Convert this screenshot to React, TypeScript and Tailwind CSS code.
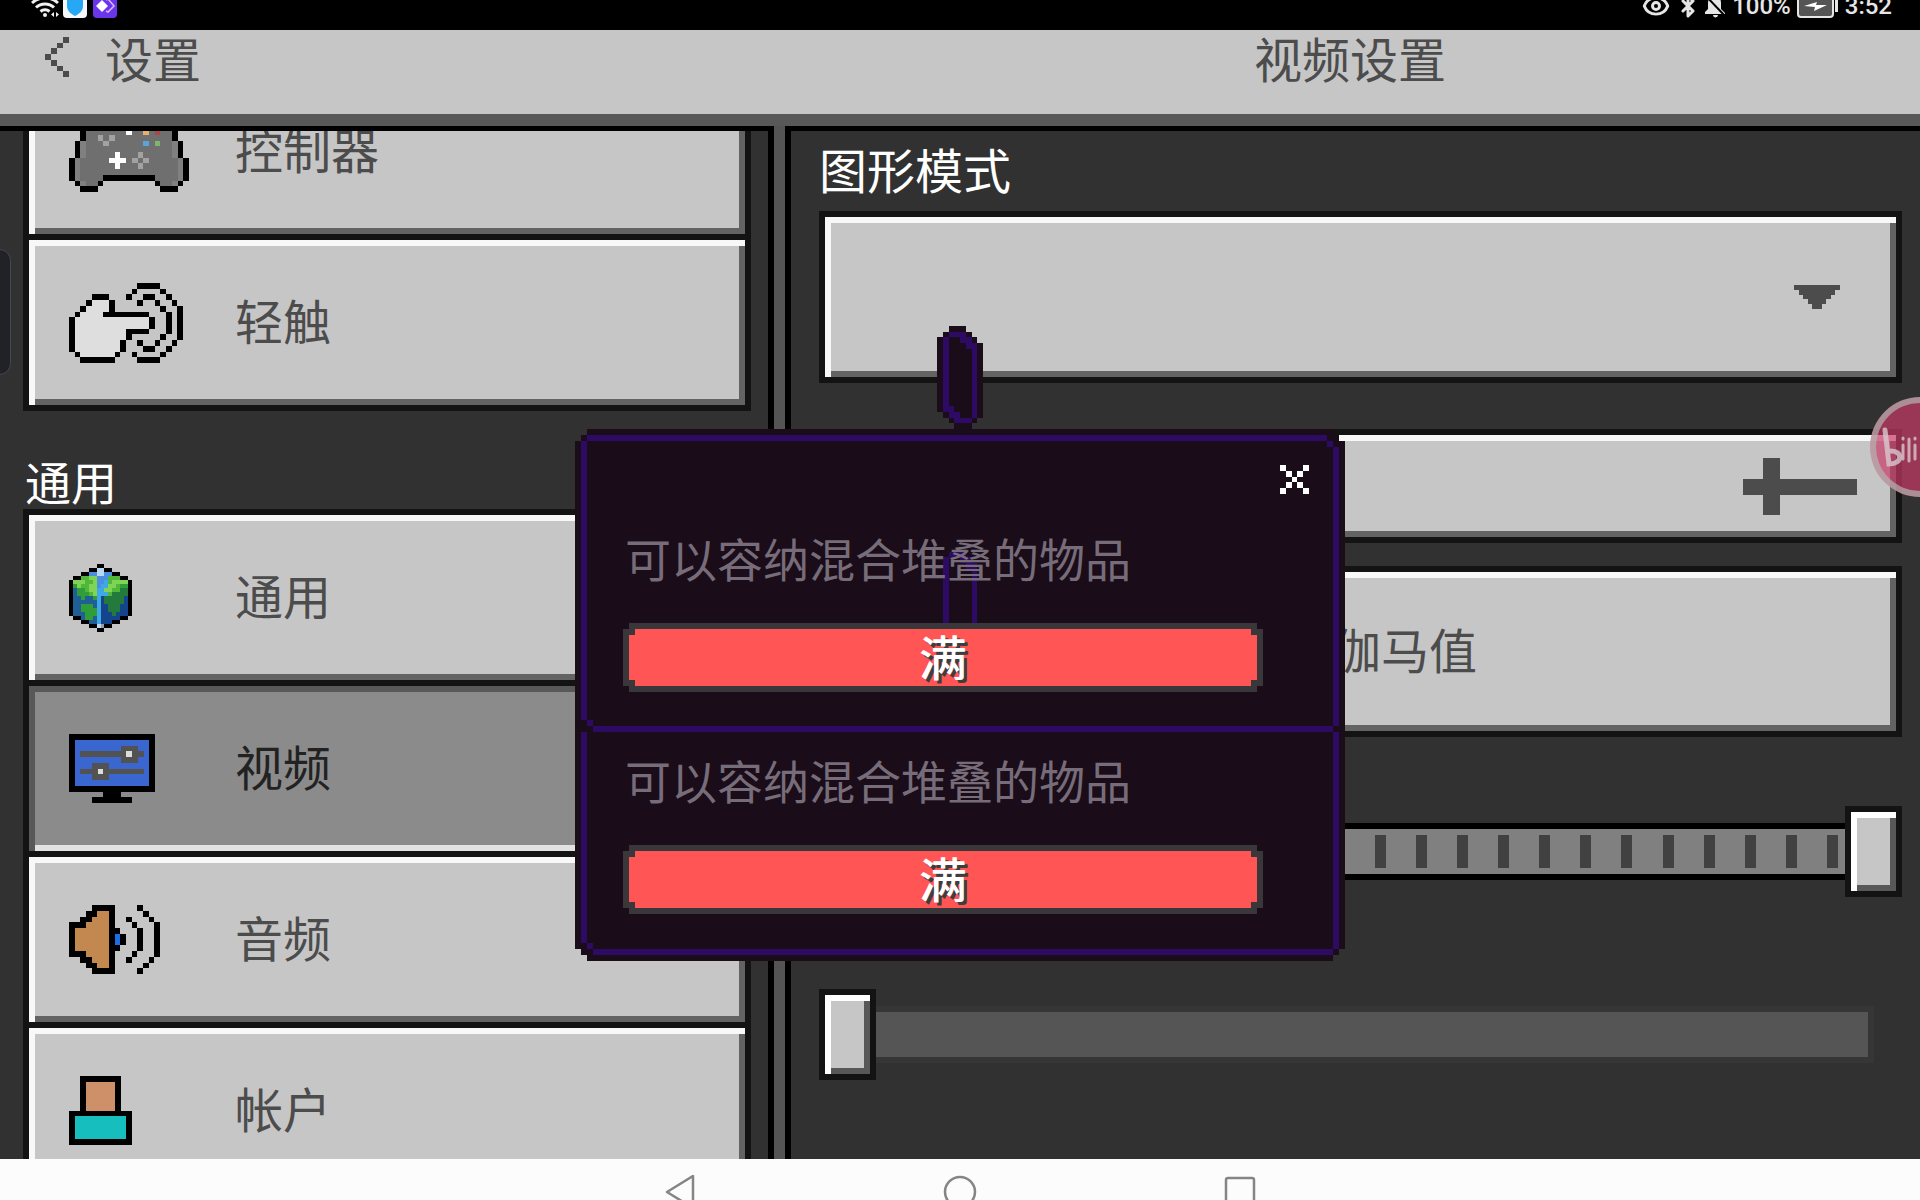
import { useState } from 'react';
import { Bluetooth, Eye } from 'lucide-react';
import clsx from 'clsx';

type Palette = Record<string, string>;

const BASE: Palette = { K: '#000000', W: '#ffffff' };

// One character is one square of the sprite, '.' is empty
function Sprite({ rows, palette, className }: { rows: string[]; palette?: Palette; className?: string }) {
  const colors = { ...BASE, ...palette };
  return (
    <svg
      viewBox={`0 0 ${rows[0].length} ${rows.length}`}
      preserveAspectRatio="none"
      shapeRendering="crispEdges"
      className={clsx('shrink-0', className)}
      aria-hidden="true"
    >
      {rows.flatMap((row, y) =>
        row.split('').map((c, x) =>
          c === '.' ? null : <rect key={`${x}-${y}`} x={x} y={y} width={1} height={1} fill={colors[c]} />
        )
      )}
    </svg>
  );
}

const controller = [
  '....KKKKKKKKKKKKK....',
  '...KgggggggggggggK...',
  '...KgggggggggggggK...',
  '..KgggggggWggOgRggK..',
  '..KggLgLggggggggggK..',
  '.KhgggLggggggBgGgghK.',
  '.KhggggggggggggggghK.',
  '.KhgggggWgggLggggghK.',
  'KhgggggWWWgLgLggggghK',
  'KhggggggWgggLgggggghK',
  'KhggggggggggggggggghK',
  'KhggggKKKKKKKKKgggghK',
  '.KhggK.........KgghK.',
  '..KKK...........KKK..',
];

const touch = [
  '............KKKK....',
  '...........K....K...',
  '....KKK...K..KK..K..',
  '...KwwwK....K..K..K.',
  '..KwwwwK........K..K',
  '.KwwwwKKKKKKKK...K.K',
  'KwwwwwwwwwwwwwK..K.K',
  'KwwwwwwwwwwwwwK..K.K',
  'KwwwwwwwwwKKKK...K.K',
  'KwwwwwwwwwK.....K..K',
  'KwwwwwwwwK..K..K..K.',
  'KwwwwwwwwK...KK..K..',
  '.KwwwwwwK..K....K...',
  '..KKKKKK....KKKK....',
];

const globe = [
  '.......KK.......',
  '.....KKllKK.....',
  '...KKbbllbbKK...',
  '.KKggggbbbgggKK.'.replace('gggg', 'ggyy'),
  'KyyyggybbcgyyyyK',
  'KGyggyybccyygGGK',
  'KtGGgyyccyyggddK',
  'KtGGGgycccgddddK',
  'KttGttGcndddddnK',
  'KttttttcndddddnK',
  'KttGGGtcnndddnnK',
  'KttGGGGcnndddnnK',
  'KtttGGGcnnndnnnK',
  '.KKtGGtcnnnnnKK.',
  '...KKttcnnnKK...',
  '.....KKlsKK.....',
  '.......KK.......',
];

const monitor = [
  'KKKKKKKKKKKKKKK',
  'KbbbbbbbbbbbbbK',
  'KbbbbbbbbdddbbK',
  'KbddddddddwddbK',
  'KbbbbbbbbdddbbK',
  'KbbbdddbbbbbbbK',
  'KbdddwdddddddbK',
  'KbbbdddbbbbbbbK',
  'KbbbbbbbbbbbbbK',
  'KKKKKKKKKKKKKKK',
  '......KKK......',
  '....KKKKKKK....',
];

const speaker = [
  '....KKKK....K...',
  '...KKooK.....K..',
  '..KKoooK..K...K.',
  'KKKooooK...K...K',
  'KooooooKK...K..K',
  'KooooooKbK..K..K',
  'KooooooKbK..K..K',
  'KooooooKK...K..K',
  'KKKooooK...K...K',
  '..KKoooK..K...K.',
  '...KKooK.....K..',
  '....KKKK....K...',
];

const account = [
  '..KKKKKKK..',
  '..KsssssK..',
  '..KsssssK..',
  '..KsssssK..',
  '..KsssssK..',
  '..KsssssK..',
  'KKKKKKKKKKK',
  'KtttttttttK',
  'KtttttttttK',
  'KtttttttttK',
  'KtttttttttK',
  'KKKKKKKKKKK',
];

const chevron = ['...K', '..K.', '.K..', 'K...', '.K..', '..K.', '...K'];
const cross = ['W...W', '.W.W.', '..W..', '.W.W.', 'W...W'];
const arrowDown = ['KKKKKKKKKK', '.KKKKKKKK.', '..KKKKKK..', '...KKKK...', '....KK....'];

const pill = [
  '..KKK...',
  '.KPPPK..',
  'KPKKPPK.',
  'KPKKKPPK',
  'KPKKKKPK',
  'KPKKKKPK',
  'KPKKKKPK',
  'KPKKKKPK',
  'KPKKKKPK',
  'KPKKKKPK',
  'KPKKKKPK',
  'KPKKKKPK',
  'KPKKKKPK',
  'KPKKKKPK',
  'KPPKKKPK',
  '.KPPKKPK',
  '..KPPPK.',
  '...KKK..',
];
const pillColors = { K: '#1a0c18', P: '#2d0a63' };

const raised = 'bg-[#c6c6c6] shadow-[inset_6px_6px_0_#f8f8f8,inset_-6px_-6px_0_#636363]';
const pressed = 'bg-[#8b8b8b] shadow-[inset_6px_6px_0_#585858,inset_-6px_-6px_0_#e2e2e2]';

// Corners cut out in 6px squares
const notch =
  '[clip-path:polygon(6px_0,calc(100%-6px)_0,calc(100%-6px)_6px,100%_6px,100%_calc(100%-6px),calc(100%-6px)_calc(100%-6px),calc(100%-6px)_100%,6px_100%,6px_calc(100%-6px),0_calc(100%-6px),0_6px,6px_6px)]';
const stairs =
  '[clip-path:polygon(12px_0,calc(100%-12px)_0,calc(100%-12px)_6px,calc(100%-6px)_6px,calc(100%-6px)_12px,100%_12px,100%_calc(100%-12px),calc(100%-6px)_calc(100%-12px),calc(100%-6px)_calc(100%-6px),calc(100%-12px)_calc(100%-6px),calc(100%-12px)_100%,12px_100%,12px_calc(100%-6px),6px_calc(100%-6px),6px_calc(100%-12px),0_calc(100%-12px),0_12px,6px_12px,6px_6px,12px_6px)]';
const frameTop =
  '[clip-path:polygon(6px_0,calc(100%-12px)_0,calc(100%-12px)_6px,calc(100%-6px)_6px,calc(100%-6px)_12px,100%_12px,100%_calc(100%-6px),calc(100%-6px)_calc(100%-6px),calc(100%-6px)_100%,12px_100%,12px_calc(100%-6px),6px_calc(100%-6px),6px_calc(100%-12px),0_calc(100%-12px),0_6px,6px_6px)]';
const frameBottom =
  '[clip-path:polygon(0_0,100%_0,100%_calc(100%-6px),calc(100%-6px)_calc(100%-6px),calc(100%-6px)_100%,12px_100%,12px_calc(100%-6px),6px_calc(100%-6px),6px_calc(100%-12px),0_calc(100%-12px))]';
const cardTop =
  '[clip-path:polygon(0_0,calc(100%-6px)_0,calc(100%-6px)_6px,100%_6px,100%_100%,6px_100%,6px_calc(100%-6px),0_calc(100%-6px))]';
const cardBottom = '[clip-path:polygon(0_0,100%_0,100%_100%,6px_100%,6px_calc(100%-6px),0_calc(100%-6px))]';

function MenuItem({ label, active, onClick, children }: {
  label: string;
  active?: boolean;
  onClick: () => void;
  children: React.ReactNode;
}) {
  return (
    <button
      type="button"
      onClick={onClick}
      className={clsx(
        'flex h-[165px] w-full shrink-0 items-center pl-10 text-left text-5xl',
        active ? `${pressed} text-[#222222]` : `${raised} text-[#4c4c4c]`
      )}
    >
      <span className="flex w-[166px]">{children}</span>
      <span className="pb-2">{label}</span>
    </button>
  );
}

function StorageCard({ first }: { first?: boolean }) {
  return (
    <section className={clsx('bg-[#2d0a63] px-1.5 pb-1.5', first ? `pt-1.5 ${frameTop}` : frameBottom)}>
      <div
        className={clsx(
          'bg-[#1a0c18] pr-[70px] pl-9',
          first ? `h-[285px] pt-[89px] ${cardTop}` : `h-[217px] pt-5 ${cardBottom}`
        )}
      >
        {first && (
          <Sprite rows={pill.slice(0, 14)} palette={pillColors} className="absolute top-[117px] left-[362px] h-20 w-[46px]" />
        )}
        <p className="relative mb-[39px] pl-0.5 text-[46px] leading-[54px] text-[#776c79]">可以容纳混合堆叠的物品</p>
        <div className={`relative h-[69px] bg-[#3a373b] p-1.5 ${notch}`}>
          <div
            className={`flex h-full items-center justify-center bg-[#ff5555] pb-1.5 text-5xl font-medium text-white [text-shadow:3px_3px_0_#3e3e3e] ${notch}`}
          >
            满
          </div>
        </div>
      </div>
    </section>
  );
}

const thumb =
  'col-start-1 row-start-1 h-[91px] w-full appearance-none bg-transparent [&::-webkit-slider-thumb]:h-[91px] [&::-webkit-slider-thumb]:w-[57px] [&::-webkit-slider-thumb]:appearance-none [&::-webkit-slider-thumb]:border-6 [&::-webkit-slider-thumb]:border-[#131313] [&::-webkit-slider-thumb]:bg-[#c6c6c6] [&::-webkit-slider-thumb]:shadow-[inset_6px_6px_0_#ffffff,inset_-6px_-6px_0_#585858]';

export default function App() {
  const [tab, setTab] = useState('video');
  const [fancy, setFancy] = useState(false);

  return (
    <div className="relative flex h-screen flex-col overflow-hidden bg-[#313131] font-['Noto_Sans_CJK_SC',sans-serif]">
      {/* 状态栏 */}
      <div className="h-[30px] shrink-0 overflow-hidden bg-black">
        <div className="-mt-2 flex h-7 items-center pr-7 pl-[31px] font-[Roboto,sans-serif] text-2xl text-[#e6e6e6]">
          <svg viewBox="0 0 28 24" className="mr-1 h-6 w-7" fill="none" stroke="#f0f0f0" strokeWidth="3">
            <path d="M1 9a19 19 0 0 1 26 0M5 13.500a13 13 0 0 1 18 0M9.500 17.500a7 7 0 0 1 9 0" />
            <circle cx="14" cy="21" r="2" fill="#f0f0f0" stroke="none" />
            <path d="M23 18v5l-3-2.500zM25 18v5l3-2.500z" fill="#f0f0f0" stroke="none" />
          </svg>
          <svg viewBox="0 0 24 24" className="mr-1.5 h-6 w-6">
            <rect width="24" height="24" rx="4" fill="#f4f8fc" />
            <path d="M12 2l8 2v8c0 5-4 8-8 10-4-2-8-5-8-10V4z" fill="#27a8f5" />
          </svg>
          <svg viewBox="0 0 24 24" className="h-6 w-6">
            <rect width="24" height="24" rx="4" fill="#6b35ea" />
            <path d="M9 6l6 6-6 6-6-6z" fill="#fff" />
            <path d="M13 6l2-1 6 7-6 6-2-1" fill="none" stroke="#d9b8ff" strokeWidth="1.500" />
          </svg>
          <div className="ml-auto flex items-center">
            <Eye className="mr-1.5 h-7 w-7" strokeWidth={2.5} />
            <Bluetooth className="mr-1 h-6 w-6" strokeWidth={3} />
            <svg viewBox="0 0 22 24" className="mr-1.5 h-6 w-[22px]" fill="#e6e6e6">
              <path d="M11 1c4 1 6 4 6 8v6l4 4v1H1v-2l3-3V9c0-4 3-7 7-8zM9 21h5a2 2 0 0 1-5 0z" />
              <path d="M1 1l20 21" stroke="#000" strokeWidth="2" />
            </svg>
            <span className="font-medium">100%</span>
            <svg viewBox="0 0 42 24" className="mx-1.5 h-6 w-[42px]">
              <rect x="1" y="2" width="35" height="21" rx="3" fill="#555" stroke="#e6e6e6" strokeWidth="2" />
              <path d="M39.500 6v12" stroke="#e6e6e6" strokeWidth="3" />
              <path d="M7 12l13-4-1 3h11l-13 6 1-4z" fill="#fff" />
            </svg>
            <span className="font-medium">3:52</span>
          </div>
        </div>
      </div>

      {/* 标题栏 */}
      <header className="flex h-[84px] shrink-0 items-center bg-[#c6c6c6] text-5xl text-[#4c4c4c]">
        <div className="flex w-2/5 items-center pl-[45px]">
          <button type="button" aria-label="返回" className="mr-9 pb-[30px]">
            <Sprite rows={chevron} palette={{ K: '#4c4c4c' }} className="h-10 w-6" />
          </button>
          <span className="pb-[30px]">设置</span>
        </div>
        <h1 className="flex-1 pr-3 pb-[30px] pl-6 text-center">视频设置</h1>
      </header>
      <div className="h-3 shrink-0 bg-[#585858]" />

      <div className="flex min-h-0 flex-1">
        <nav className="w-2/5 overflow-hidden border-t-5 border-black pr-[17px] pl-[23px]">
          <div className="-mt-[68px] flex flex-col gap-1.5 bg-[#131313] p-1.5">
            <MenuItem label="控制器" active={tab === 'controller'} onClick={() => setTab('controller')}>
              <Sprite
                rows={controller}
                palette={{ g: '#6f6f6f', h: '#808080', L: '#a2a2a2', O: '#e8b070', R: '#a84848', B: '#5aa5d8', G: '#7fb56c' }}
                className="h-20 w-[120px]"
              />
            </MenuItem>
            <MenuItem label="轻触" active={tab === 'touch'} onClick={() => setTab('touch')}>
              <Sprite rows={touch} palette={{ w: '#dedede' }} className="h-20 w-[114px]" />
            </MenuItem>
          </div>
          <h2 className="flex h-[98px] items-end pb-1 pl-0.5 text-[46px] leading-[50px] text-white">通用</h2>
          <div className="flex flex-col gap-1.5 bg-[#131313] p-1.5">
            <MenuItem label="通用" active={tab === 'general'} onClick={() => setTab('general')}>
              <Sprite
                rows={globe}
                palette={{
                  l: '#b8d8f4', b: '#4a90e0', g: '#4fb83a', y: '#7fd455', G: '#2f9e38', d: '#237a3c',
                  n: '#14448c', t: '#1f5f96', c: '#3fa9e8', s: '#9a9aa8',
                }}
                className="h-[68px] w-[63px]"
              />
            </MenuItem>
            <MenuItem label="视频" active={tab === 'video'} onClick={() => setTab('video')}>
              <Sprite rows={monitor} palette={{ b: '#3a66cf', d: '#525252', w: '#dcdcdc' }} className="h-[69px] w-[86px]" />
            </MenuItem>
            <MenuItem label="音频" active={tab === 'audio'} onClick={() => setTab('audio')}>
              <Sprite rows={speaker} palette={{ o: '#c2884f', b: '#1a6ee8' }} className="h-[69px] w-[91px]" />
            </MenuItem>
            <MenuItem label="帐户" active={tab === 'account'} onClick={() => setTab('account')}>
              <Sprite rows={account} palette={{ s: '#ce9068', t: '#16bfbd' }} className="h-[69px] w-[63px]" />
            </MenuItem>
          </div>
        </nav>

        <div className="w-[23px] shrink-0 border-x-6 border-black bg-[#545454]" />

        <main className="min-w-0 flex-1 overflow-hidden border-t-5 border-black pr-[18px] pl-7 text-[#4c4c4c]">
          <label htmlFor="graphics" className="block h-20 text-5xl leading-[74px] text-white">图形模式</label>
          <div className="grid items-center">
            <select
              id="graphics"
              className={`col-start-1 row-start-1 h-[172px] w-full appearance-none border-6 border-[#131313] ${raised}`}
            >
              <option value=""></option>
            </select>
            <Sprite
              rows={arrowDown}
              palette={{ K: '#4c4c4c' }}
              className="pointer-events-none col-start-1 row-start-1 mr-[62px] h-6 w-[46px] justify-self-end"
            />
          </div>
          <button
            type="button"
            role="switch"
            aria-checked={fancy}
            aria-label="精美图像"
            onClick={() => setFancy(!fancy)}
            className={`mt-[46px] flex h-[114px] w-full items-center justify-end border-6 border-[#131313] pr-[39px] ${raised}`}
          >
            <svg viewBox="0 0 114 57" className="h-[57px] w-[114px]" fill="#4c4c4c" shapeRendering="crispEdges">
              <rect y="21" width="114" height="16" />
              <rect x="20" width="17" height="57" />
            </svg>
          </button>
          <button
            type="button"
            className={`mt-[23px] flex h-[171px] w-full items-center justify-center border-6 border-[#131313] pr-1 pb-2 pl-[93px] text-5xl ${raised}`}
          >
            伽马值
          </button>
          <div className="mt-[69px] grid items-center">
            <div className="col-start-1 row-start-1 flex h-[57px] justify-between border-6 border-black bg-[#808080] py-1.5 pr-[58px] pl-4">
              {Array.from({ length: 25 }, (_, i) => (
                <span key={i} className="w-[11px] bg-[#414141]" />
              ))}
            </div>
            <input type="range" aria-label="亮度" min={0} max={100} defaultValue={100} className={thumb} />
          </div>
          <div className="mt-[92px] grid items-center">
            <div className="col-start-1 row-start-1 mr-7 h-[57px] border-6 border-[#363636] bg-[#555555]" />
            <input type="range" aria-label="视野" min={0} max={100} defaultValue={0} className={thumb} />
          </div>
        </main>
      </div>

      {/* 系统导航 */}
      <footer className="h-[41px] shrink-0 overflow-hidden bg-[#fcfcfc]">
        <div className="flex items-start justify-center gap-[246px] pt-4 text-[#858585]">
          <button type="button" aria-label="后退">
            <svg viewBox="0 0 34 34" className="h-[34px] w-[34px]" fill="none" stroke="currentColor" strokeWidth="2.500" strokeLinejoin="round">
              <path d="M30 1v32L4 17z" />
            </svg>
          </button>
          <button type="button" aria-label="主页">
            <svg viewBox="0 0 34 34" className="h-[34px] w-[34px]" fill="none" stroke="currentColor" strokeWidth="2.500">
              <circle cx="17" cy="17" r="15" />
            </svg>
          </button>
          <button type="button" aria-label="最近">
            <svg viewBox="0 0 34 34" className="h-[34px] w-[34px]" fill="none" stroke="currentColor" strokeWidth="2.500">
              <rect x="3" y="3" width="28" height="28" rx="2" />
            </svg>
          </button>
        </div>
      </footer>

      {/* 侧边把手 */}
      <div className="absolute top-[249px] -left-3 h-[126px] w-[23px] rounded-xl border border-[#3e4b50] bg-[#222226]" />

      <Sprite rows={pill} palette={pillColors} className="absolute top-[326px] left-[937px] h-[103px] w-[46px]" />

      {/* 容器提示 */}
      <div
        role="dialog"
        aria-label="容器"
        className={`absolute top-[429px] left-1/2 w-[770px] -translate-x-1/2 bg-[#1a0c18] p-1.5 ${stairs}`}
      >
        <StorageCard first />
        <StorageCard />
        <button type="button" aria-label="关闭" className="absolute top-9 right-9">
          <Sprite rows={cross} className="h-[29px] w-[29px]" />
        </button>
      </div>

      {/* 悬浮球 */}
      <div className="absolute top-[397px] -right-[50px] h-[100px] w-[100px] rounded-full border-6 border-[#b4b4b4]/70 bg-[#c83a68]/70">
        <svg viewBox="0 0 88 88" className="h-full w-full" fill="none" stroke="#d8c8d0" strokeLinecap="round" strokeOpacity="0.8">
          <path d="M9 27l4 34c14 0 14-13 2-13" strokeWidth="5" />
          <path d="M27 42v14M33 36v22M39 42v14M27 35v1M39 35v1" strokeWidth="3" />
        </svg>
      </div>
    </div>
  );
}
